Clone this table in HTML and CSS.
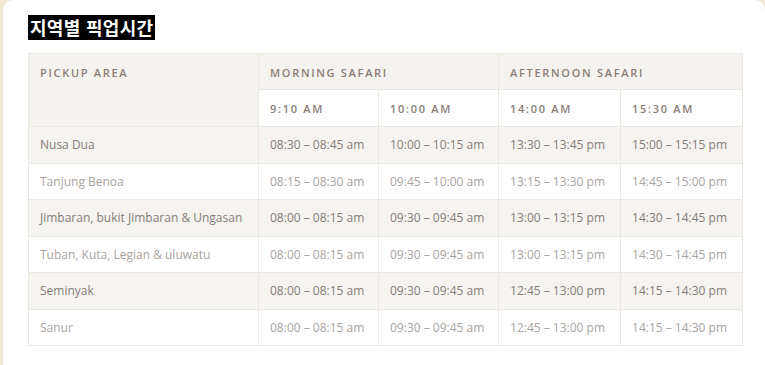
FILE: index.html
```html
<!DOCTYPE html>
<html lang="ko">
<head>
<meta charset="utf-8">
<link rel="stylesheet" href="styles.css">
</head>
<body>
<div class="card">
  <h2 class="title">지역별 픽업시간</h2>
  <table class="sched">
    <colgroup>
      <col class="c-area"><col class="c-time"><col class="c-time"><col class="c-time2"><col class="c-time2">
    </colgroup>
    <thead>
      <tr class="h1">
        <th rowspan="2">PICKUP AREA</th>
        <th colspan="2">MORNING SAFARI</th>
        <th colspan="2">AFTERNOON SAFARI</th>
      </tr>
      <tr class="h2">
        <th>9:10 AM</th><th>10:00 AM</th><th>14:00 AM</th><th>15:30 AM</th>
      </tr>
    </thead>
    <tbody>
      <tr class="odd"><td>Nusa Dua</td><td>08:30 – 08:45 am</td><td>10:00 – 10:15 am</td><td>13:30 – 13:45 pm</td><td>15:00 – 15:15 pm</td></tr>
      <tr class="even"><td>Tanjung Benoa</td><td>08:15 – 08:30 am</td><td>09:45 – 10:00 am</td><td>13:15 – 13:30 pm</td><td>14:45 – 15:00 pm</td></tr>
      <tr class="odd"><td>Jimbaran, bukit Jimbaran &amp; Ungasan</td><td>08:00 – 08:15 am</td><td>09:30 – 09:45 am</td><td>13:00 – 13:15 pm</td><td>14:30 – 14:45 pm</td></tr>
      <tr class="even"><td>Tuban, Kuta, Legian &amp; uluwatu</td><td>08:00 – 08:15 am</td><td>09:30 – 09:45 am</td><td>13:00 – 13:15 pm</td><td>14:30 – 14:45 pm</td></tr>
      <tr class="odd"><td>Seminyak</td><td>08:00 – 08:15 am</td><td>09:30 – 09:45 am</td><td>12:45 – 13:00 pm</td><td>14:15 – 14:30 pm</td></tr>
      <tr class="even"><td>Sanur</td><td>08:00 – 08:15 am</td><td>09:30 – 09:45 am</td><td>12:45 – 13:00 pm</td><td>14:15 – 14:30 pm</td></tr>
    </tbody>
  </table>
</div>
</body>
</html>
```

FILE: styles.css
```css
html, body {
  margin: 0;
  padding: 0;
  background: #f1e8d3;
  height: 100%;
  overflow: hidden;
}
.card {
  margin-left: 3px;
  width: 762px;
  height: 100%;
  background: #ffffff;
  border-radius: 10px 10px 0 0;
  padding: 15px 0 0 25px;
  box-sizing: border-box;
}
.title {
  display: inline-block;
  margin: 0;
  background: #000;
  color: #fff;
  font-family: "Noto Sans CJK KR", "Noto Sans", sans-serif;
  font-weight: 700;
  font-size: 18px;
  line-height: 25px;
  height: 25px;
  padding: 0 2px 0 2px;
  letter-spacing: 0.3px;
}
.sched {
  margin-top: 13px;
  border-collapse: collapse;
  width: 714px;
  table-layout: fixed;
  font-family: "Open Sans", sans-serif;
  font-size: 12px;
  border: 1px solid #ebe8e2;
}
.c-area { width: 230px; }
.c-time { width: 120px; }
.c-time2 { width: 122px; }
.sched th, .sched td {
  border: 1px solid #ebe8e2;
  text-align: left;
  padding: 0 11px;
  white-space: nowrap;
}
.sched th {
  font-size: 11px;
  font-weight: 600;
  letter-spacing: 1.7px;
  color: #8a7e77;
  vertical-align: middle;
}
.h1 th {
  background: #f5f3ef;
  height: 36px;
  vertical-align: top;
  padding-top: 11px;
  box-sizing: border-box;
}
.h2 th {
  background: #ffffff;
  height: 36px;
}
.sched td {
  height: 35.5px;
}
.odd td {
  background: #f6f4f0;
  color: #857d78;
}
.even td {
  background: #ffffff;
  color: #a9a4a0;
}
```
